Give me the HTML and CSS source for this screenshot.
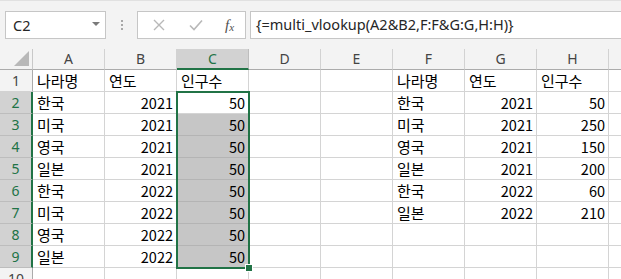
FILE: index.html
```html
<!DOCTYPE html>
<html lang="ko">
<head>
<meta charset="utf-8">
<link rel="stylesheet" href="styles.css">
</head>
<body>
<div class="app">
  <div class="toolbar">
    <div class="namebox">
      <span class="nb-text">C2</span>
      <span class="nb-arrow"></span>
    </div>
    <div class="grip"><i></i><i></i><i></i></div>
    <div class="fbtns">
      <svg class="ic-x" width="12" height="12" viewBox="0 0 12 12"><path d="M1 1L11 11M11 1L1 11" stroke="#b8b8b8" stroke-width="1.4" fill="none"/></svg>
      <svg class="ic-ok" width="14" height="12" viewBox="0 0 14 12"><path d="M1 6.5L5 10.5L13 1.5" stroke="#b8b8b8" stroke-width="1.6" fill="none"/></svg>
      <span class="fx">f<sub>x</sub></span>
    </div>
    <div class="formula">{=multi_vlookup(A2&amp;B2,F:F&amp;G:G,H:H)}</div>
  </div>

  <div class="sheet-wrap">
    <div class="sheet">
      <div class="corner"><span class="tri"></span></div>
      <div class="ch">A</div><div class="ch">B</div><div class="ch sel">C</div><div class="ch">D</div><div class="ch">E</div><div class="ch">F</div><div class="ch">G</div><div class="ch">H</div><div class="ch"></div>

      <div class="rh">1</div>
      <div class="c">나라명</div><div class="c">연도</div><div class="c">인구수</div><div class="c"></div><div class="c"></div><div class="c">나라명</div><div class="c">연도</div><div class="c">인구수</div><div class="c"></div>

      <div class="rh sel">2</div>
      <div class="c">한국</div><div class="c n">2021</div><div class="c n">50</div><div class="c"></div><div class="c"></div><div class="c">한국</div><div class="c n">2021</div><div class="c n">50</div><div class="c"></div>

      <div class="rh sel">3</div>
      <div class="c">미국</div><div class="c n">2021</div><div class="c n s">50</div><div class="c"></div><div class="c"></div><div class="c">미국</div><div class="c n">2021</div><div class="c n">250</div><div class="c"></div>

      <div class="rh sel">4</div>
      <div class="c">영국</div><div class="c n">2021</div><div class="c n s">50</div><div class="c"></div><div class="c"></div><div class="c">영국</div><div class="c n">2021</div><div class="c n">150</div><div class="c"></div>

      <div class="rh sel">5</div>
      <div class="c">일본</div><div class="c n">2021</div><div class="c n s">50</div><div class="c"></div><div class="c"></div><div class="c">일본</div><div class="c n">2021</div><div class="c n">200</div><div class="c"></div>

      <div class="rh sel">6</div>
      <div class="c">한국</div><div class="c n">2022</div><div class="c n s">50</div><div class="c"></div><div class="c"></div><div class="c">한국</div><div class="c n">2022</div><div class="c n">60</div><div class="c"></div>

      <div class="rh sel">7</div>
      <div class="c">미국</div><div class="c n">2022</div><div class="c n s">50</div><div class="c"></div><div class="c"></div><div class="c">일본</div><div class="c n">2022</div><div class="c n">210</div><div class="c"></div>

      <div class="rh sel">8</div>
      <div class="c">영국</div><div class="c n">2022</div><div class="c n s">50</div><div class="c"></div><div class="c"></div><div class="c"></div><div class="c"></div><div class="c"></div><div class="c"></div>

      <div class="rh sel">9</div>
      <div class="c">일본</div><div class="c n">2022</div><div class="c n s">50</div><div class="c"></div><div class="c"></div><div class="c"></div><div class="c"></div><div class="c"></div><div class="c"></div>

      <div class="rh">10</div>
      <div class="c"></div><div class="c"></div><div class="c"></div><div class="c"></div><div class="c"></div><div class="c"></div><div class="c"></div><div class="c"></div><div class="c"></div>
    </div>
    <div class="selection"><span class="handle"></span></div>
  </div>
</div>
</body>
</html>
```

FILE: styles.css
```css
html, body {
  margin: 0;
  padding: 0;
  background: #ffffff;
  overflow: hidden;
}
.app {
  width: 621px;
  height: 279px;
  overflow: hidden;
  font-family: "Noto Sans CJK KR", "Noto Sans", sans-serif;
}
.toolbar {
  box-sizing: border-box;
  height: 49px;
  background: #f3f3f3;
  border-top: 1px solid #e1e1e1;
  display: flex;
  align-items: flex-start;
  padding-top: 10px;
  padding-left: 5px;
}
.namebox {
  box-sizing: border-box;
  width: 101px;
  height: 28px;
  background: #fff;
  border: 1px solid #c6c6c6;
  display: flex;
  align-items: center;
  justify-content: space-between;
  padding: 0 5px 0 7px;
}
.nb-text {
  font-family: "Noto Sans", sans-serif;
  font-size: 14.5px;
  color: #262626;
}
.nb-arrow {
  width: 0;
  height: 0;
  border-left: 4px solid transparent;
  border-right: 4px solid transparent;
  border-top: 4px solid #7a7a7a;
  margin-bottom: 2px;
}
.grip {
  width: 31px;
  height: 28px;
  display: flex;
  flex-direction: column;
  align-items: center;
  justify-content: center;
  gap: 2px;
}
.grip i {
  width: 2px;
  height: 2px;
  background: #a8a8a8;
}
.fbtns {
  box-sizing: border-box;
  width: 109px;
  height: 28px;
  background: #fff;
  border: 1px solid #c6c6c6;
  display: flex;
  align-items: center;
  padding-left: 15px;
}
.ic-x { margin-right: 24px; }
.ic-ok { margin-right: 22px; }
.fx {
  font-family: "Liberation Serif", serif;
  font-style: italic;
  font-size: 15px;
  color: #505050;
  line-height: 1;
}
.fx sub {
  font-size: 11px;
  vertical-align: -1px;
}
.formula {
  box-sizing: border-box;
  flex: 1;
  height: 28px;
  margin-left: 4px;
  margin-right: -2px;
  background: #fff;
  border: 1px solid #c6c6c6;
  font-family: "Noto Sans", sans-serif;
  font-size: 14.5px;
  line-height: 25px;
  color: #262626;
  padding-left: 5px;
  white-space: nowrap;
}
.sheet-wrap {
  position: relative;
}
.sheet {
  display: grid;
  grid-template-columns: 33px repeat(8, 72px) 72px;
  grid-template-rows: 21px;
  grid-auto-rows: 22px;
}
.corner, .ch, .rh, .c {
  box-sizing: border-box;
  border-right: 1px solid #d4d4d4;
  border-bottom: 1px solid #d4d4d4;
  white-space: nowrap;
  overflow: hidden;
}
.corner {
  background: #f3f3f3;
  border-right-color: #c8c8c8;
  border-bottom-color: #ababab;
  position: relative;
}
.tri {
  position: absolute;
  right: 3px;
  bottom: 3px;
  width: 0;
  height: 0;
  border-left: 15px solid transparent;
  border-bottom: 15px solid #b8b8b8;
}
.ch {
  background: #f3f3f3;
  border-right-color: #d2d2d2;
  border-bottom-color: #ababab;
  text-align: center;
  font-family: "Noto Sans", sans-serif;
  font-size: 14px;
  line-height: 20px;
  color: #444;
}
.ch.sel {
  background: #d2d2d2;
  color: #217346;
  border-bottom: 2px solid #217346;
  border-right-color: #bdbdbd;
}
.rh {
  background: #f3f3f3;
  border-right-color: #ababab;
  border-bottom-color: #d2d2d2;
  text-align: center;
  font-family: "Noto Sans", sans-serif;
  font-size: 14px;
  line-height: 22px;
  color: #444;
}
.rh.sel {
  background: #d2d2d2;
  color: #217346;
  border-right: 2px solid #217346;
  border-bottom-color: #bdbdbd;
}
.c {
  font-size: 15px;
  line-height: 21px;
  color: #000;
  padding: 0 3px 0 4px;
}
.c.n {
  font-size: 14.5px;
  text-align: right;
}
.c.s {
  background: #c6c6c6;
  border-bottom-color: #b4b4b4;
}
.selection {
  position: absolute;
  left: 176px;
  top: 42px;
  width: 74px;
  height: 178px;
  box-sizing: border-box;
  border: 2px solid #217346;
  pointer-events: none;
}
.handle {
  position: absolute;
  right: -5px;
  bottom: -5px;
  width: 6px;
  height: 6px;
  background: #217346;
  border: 1px solid #fff;
}
```
